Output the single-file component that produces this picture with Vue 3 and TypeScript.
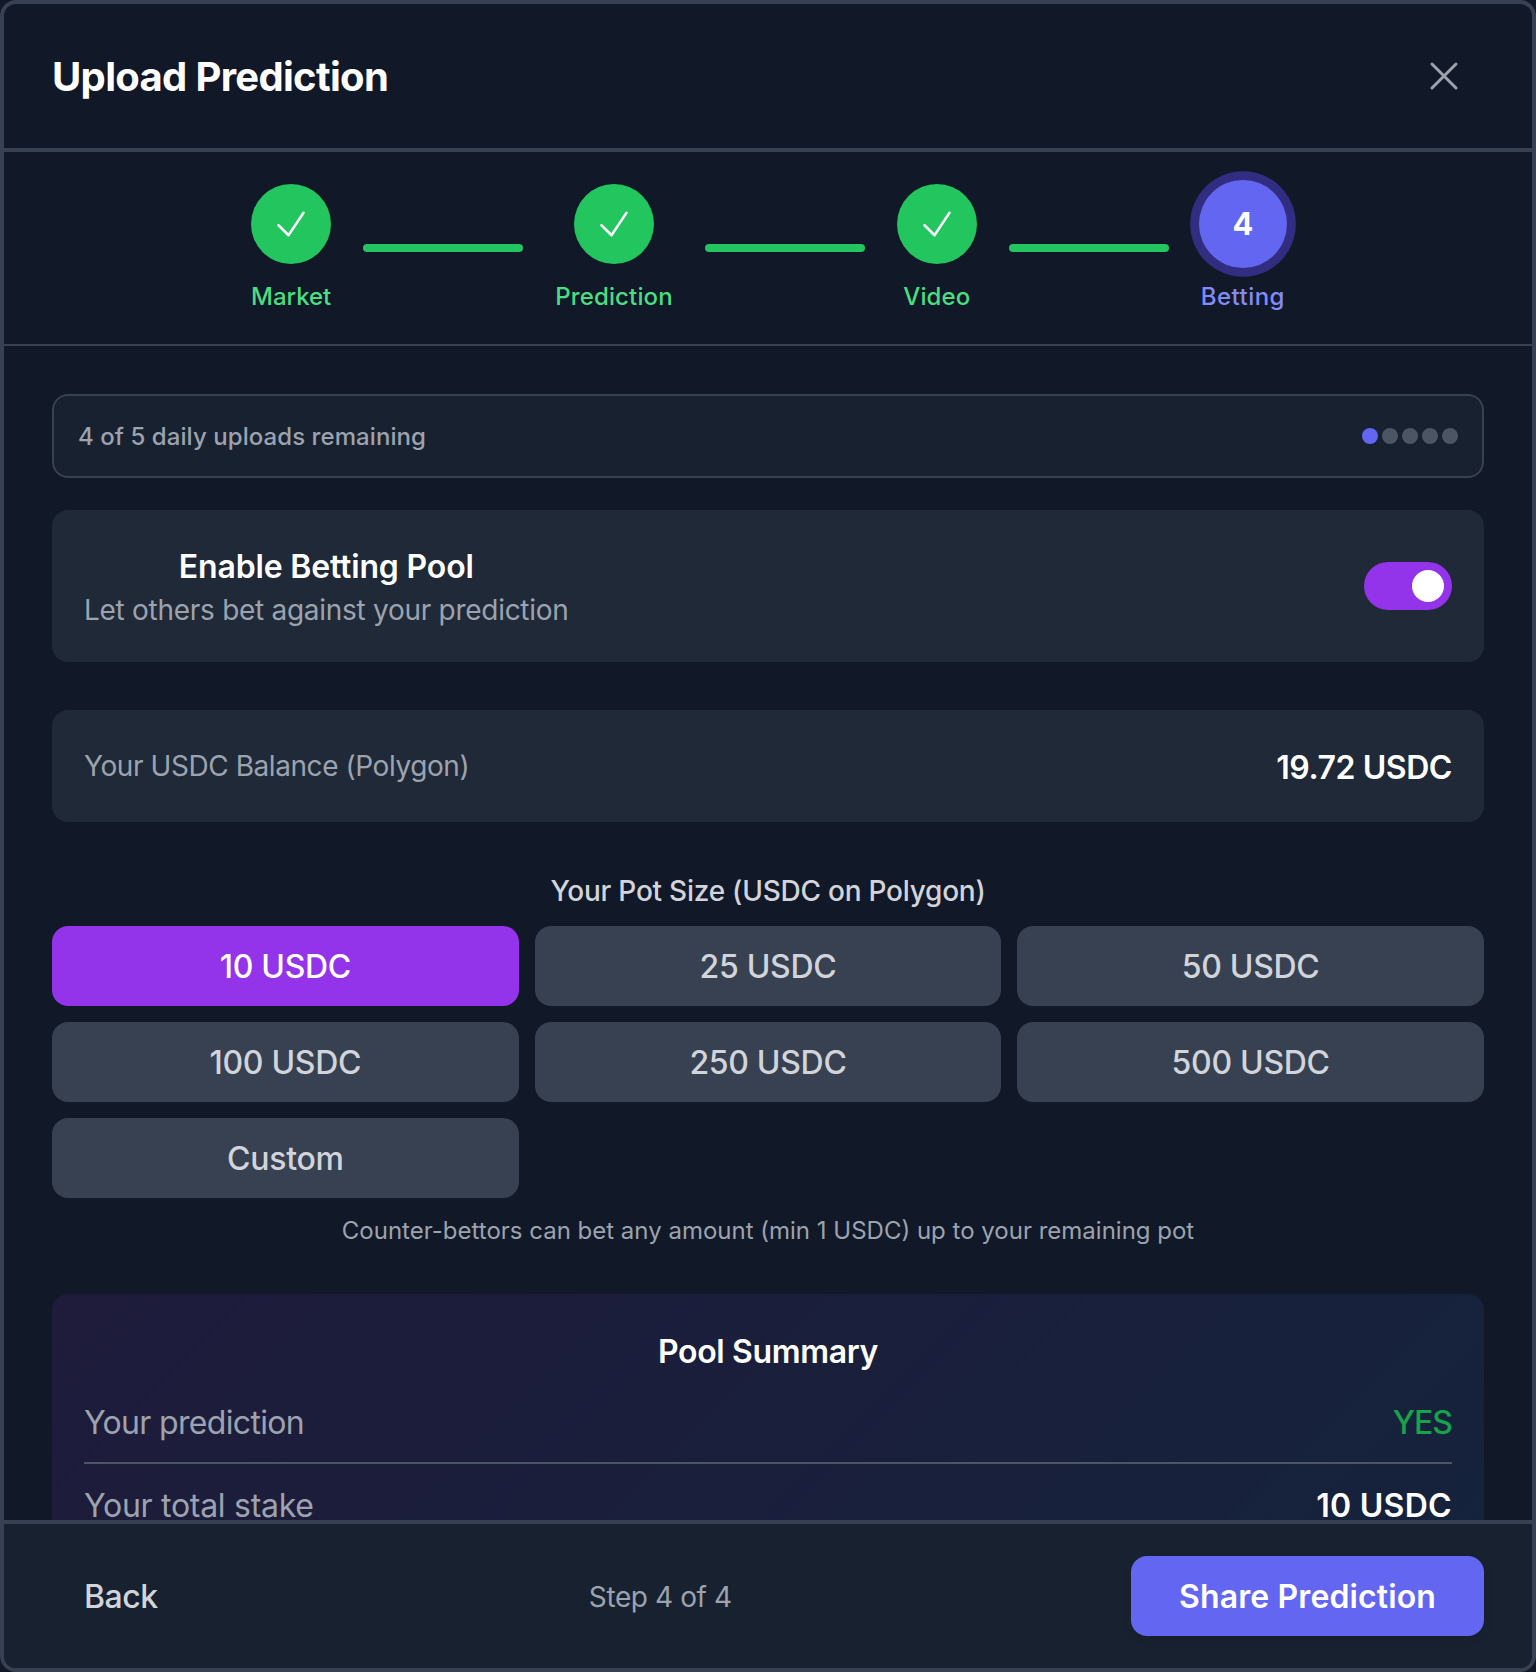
<template>
  <div class="modal">
    <header class="modal-header">
      <h2 class="title">Upload Prediction</h2>
      <button class="close" type="button" aria-label="Close">
        <svg viewBox="0 0 24 24" fill="none" stroke="currentColor" stroke-width="1.5" stroke-linecap="round" stroke-linejoin="round">
          <path d="M6 18L18 6M6 6l12 12" />
        </svg>
      </button>
    </header>

    <nav class="stepper">
      <template v-for="(step, i) in steps" :key="step.label">
        <div class="step" :class="{ active: step.active }">
          <div class="step-circle">
            <span v-if="step.active">{{ i + 1 }}</span>
            <svg v-else viewBox="0 0 24 24" fill="none" stroke="currentColor" stroke-width="1.5" stroke-linecap="round" stroke-linejoin="round">
              <path d="M4.5 12.75l6 6 9-13.5" />
            </svg>
          </div>
          <span class="step-label">{{ step.label }}</span>
        </div>
        <div v-if="i < steps.length - 1" class="connector"></div>
      </template>
    </nav>

    <main class="modal-body">
      <div class="quota">
        <span class="quota-text">4 of 5 daily uploads remaining</span>
        <div class="dots">
          <span v-for="n in 5" :key="n" class="dot" :class="{ on: n === 1 }"></span>
        </div>
      </div>

      <section class="card enable">
        <div class="enable-text">
          <div class="enable-title">Enable Betting Pool</div>
          <div class="enable-desc">Let others bet against your prediction</div>
        </div>
        <div class="toggle"><span class="knob"></span></div>
      </section>

      <section class="card balance">
        <span class="balance-label">Your USDC Balance (Polygon)</span>
        <span class="balance-value">19.72 USDC</span>
      </section>

      <div class="pot-label">Your Pot Size (USDC on Polygon)</div>
      <div class="pot-grid">
        <button
          v-for="pot in pots"
          :key="pot"
          class="pot"
          :class="{ selected: pot === selectedPot }"
          type="button"
          @click="selectedPot = pot"
        >
          {{ pot }}
        </button>
      </div>
      <p class="hint">Counter-bettors can bet any amount (min 1 USDC) up to your remaining pot</p>

      <section class="summary">
        <div class="summary-title">Pool Summary</div>
        <div class="row first">
          <span class="row-label prediction">Your prediction</span>
          <span class="yes">YES</span>
        </div>
        <div class="row second">
          <span class="row-label stake">Your total stake</span>
          <span class="row-value">{{ selectedPot }}</span>
        </div>
      </section>
    </main>

    <footer class="modal-footer">
      <button class="back" type="button">Back</button>
      <span class="step-count">Step 4 of 4</span>
      <button class="share" type="button">Share Prediction</button>
    </footer>
  </div>
</template>

<script setup lang="ts">
import { ref } from 'vue'

interface Step {
  label: string
  active?: boolean
}

const steps: Step[] = [
  { label: 'Market' },
  { label: 'Prediction' },
  { label: 'Video' },
  { label: 'Betting', active: true },
]

const pots = ['10 USDC', '25 USDC', '50 USDC', '100 USDC', '250 USDC', '500 USDC', 'Custom']
const selectedPot = ref('10 USDC')
</script>

<style>
html,
body {
  margin: 0;
  background: #111827;
}
</style>

<style scoped>
.modal {
  box-sizing: border-box;
  display: flex;
  flex-direction: column;
  width: 1536px;
  height: 1672px;
  overflow: hidden;
  background: #111827;
  border: 4px solid #374151;
  border-radius: 16px;
  color: #fff;
  font-family: Inter, "Noto Sans", sans-serif;
}

button {
  font-family: inherit;
  border: 0;
  cursor: pointer;
}

.modal-header {
  display: flex;
  align-items: center;
  justify-content: space-between;
  flex: none;
  padding: 32px 48px;
  border-bottom: 4px solid #374151;
}

.title {
  margin: 0;
  padding-top: 2px;
  font-size: 40px;
  line-height: 54px;
  font-weight: 700;
  letter-spacing: -0.68px;
}

.close {
  display: flex;
  width: 80px;
  height: 80px;
  padding: 16px;
  background: none;
  color: #9ca3af;
}

.close svg {
  width: 48px;
  height: 48px;
}

.stepper {
  display: flex;
  align-items: center;
  justify-content: center;
  flex: none;
  gap: 32px;
  padding: 32px;
  border-bottom: 2px solid #374151;
}

.step {
  display: flex;
  flex-direction: column;
  align-items: center;
  gap: 16px;
}

.step-circle {
  display: flex;
  align-items: center;
  justify-content: center;
  width: 80px;
  height: 80px;
  border-radius: 50%;
  background: #22c55e;
  color: #fff;
}

.step-circle svg {
  width: 40px;
  height: 40px;
}

.step-label {
  padding-top: 2px;
  font-size: 24px;
  line-height: 30px;
  font-weight: 500;
  letter-spacing: 0.15px;
  color: #4ade80;
}

.step:first-child .step-label {
  letter-spacing: -0.05px;
}

.step.active .step-circle {
  background: #6366f1;
  box-shadow: 0 0 0 8px #312e81;
  transform: scale(1.1);
  font-size: 28px;
  font-weight: 700;
}

.step.active .step-label {
  letter-spacing: 0.45px;
  color: #818cf8;
}

.connector {
  width: 160px;
  height: 8px;
  border-radius: 8px;
  background: #22c55e;
}

.modal-body {
  flex: 1;
  min-height: 0;
  overflow: hidden;
  padding: 48px 48px 0;
}

.quota {
  display: flex;
  align-items: center;
  justify-content: space-between;
  padding: 24px;
  margin-bottom: 32px;
  background: rgba(31, 41, 55, 0.5);
  border: 2px solid #374151;
  border-radius: 16px;
  font-size: 24px;
  font-weight: 500;
  color: #9ca3af;
}

.quota-text {
  padding-top: 2px;
  line-height: 30px;
  letter-spacing: 0.07px;
}

.dots {
  display: flex;
  gap: 4px;
}

.dot {
  width: 16px;
  height: 16px;
  border-radius: 50%;
  background: #4b5563;
}

.dot.on {
  background: #6366f1;
}

.card {
  display: flex;
  align-items: center;
  justify-content: space-between;
  padding: 32px;
  background: #1f2937;
  border-radius: 16px;
}

.enable {
  margin-bottom: 48px;
}

.enable-text {
  text-align: center;
}

.enable-title {
  padding-top: 2px;
  font-size: 32px;
  line-height: 46px;
  font-weight: 600;
  letter-spacing: -0.17px;
}

.enable-desc,
.balance-label {
  font-size: 28px;
  line-height: 40px;
  color: #9ca3af;
}

.enable-desc {
  letter-spacing: -0.28px;
}

.balance-label {
  letter-spacing: -0.43px;
}

.toggle {
  display: flex;
  align-items: center;
  justify-content: flex-end;
  box-sizing: border-box;
  width: 88px;
  height: 48px;
  padding: 0 8px;
  border-radius: 24px;
  background: #9333ea;
}

.knob {
  width: 32px;
  height: 32px;
  border-radius: 50%;
  background: #fff;
}

.balance {
  margin-bottom: 48px;
}

.balance-value {
  padding-top: 4px;
  font-size: 32px;
  line-height: 44px;
  font-weight: 600;
  letter-spacing: -0.43px;
}

.pot-label {
  margin-bottom: 16px;
  padding-top: 2px;
  text-align: center;
  font-size: 28px;
  line-height: 38px;
  font-weight: 500;
  letter-spacing: -0.24px;
  color: #d1d5db;
}

.pot-grid {
  display: grid;
  grid-template-columns: repeat(3, 1fr);
  gap: 16px;
}

.pot {
  height: 80px;
  padding: 17px 16px 15px;
  background: #374151;
  border-radius: 16px;
  font-size: 32px;
  line-height: 48px;
  font-weight: 500;
  letter-spacing: -0.3px;
  color: #d1d5db;
}

.pot.selected {
  background: #9333ea;
  color: #fff;
}

.hint {
  margin: 16px 0 48px;
  padding-top: 2px;
  text-align: center;
  font-size: 24px;
  line-height: 30px;
  color: #9ca3af;
}

.summary {
  padding: 32px;
  background: linear-gradient(135deg, rgba(147, 51, 234, 0.1), rgba(59, 130, 246, 0.1));
  border-radius: 16px;
}

.summary-title {
  margin-bottom: 24px;
  padding-top: 4px;
  text-align: center;
  font-size: 32px;
  line-height: 44px;
  font-weight: 600;
  letter-spacing: -0.36px;
}

.row {
  display: flex;
  justify-content: space-between;
  font-size: 32px;
}

.row.first {
  padding-top: 2px;
  padding-bottom: 16px;
  margin-bottom: 16px;
  line-height: 46px;
  border-bottom: 2px solid #4b5563;
}

.row.second {
  padding-top: 4px;
  line-height: 44px;
}

.row-label {
  color: #9ca3af;
}

.row-label.prediction {
  letter-spacing: -0.67px;
}

.row-label.stake {
  letter-spacing: -0.28px;
}

.yes {
  font-weight: 500;
  letter-spacing: -1px;
  color: #16a34a;
}

.row-value {
  font-weight: 600;
  letter-spacing: 0.3px;
}

.modal-footer {
  display: flex;
  align-items: center;
  justify-content: space-between;
  flex: none;
  padding: 32px 48px;
  background: rgba(31, 41, 55, 0.5);
  border-top: 4px solid #374151;
}

.back {
  padding: 17px 32px 15px;
  background: none;
  font-size: 32px;
  line-height: 48px;
  font-weight: 500;
  letter-spacing: -0.5px;
  color: #d1d5db;
}

.step-count {
  padding-top: 2px;
  font-size: 28px;
  line-height: 38px;
  letter-spacing: -0.4px;
  color: #9ca3af;
}

.share {
  padding: 17px 48px 15px;
  background: #6366f1;
  border-radius: 16px;
  font-size: 32px;
  line-height: 48px;
  font-weight: 600;
  letter-spacing: 0.12px;
  color: #fff;
  box-shadow: 0 4px 8px rgba(0, 0, 0, 0.08);
}
</style>
